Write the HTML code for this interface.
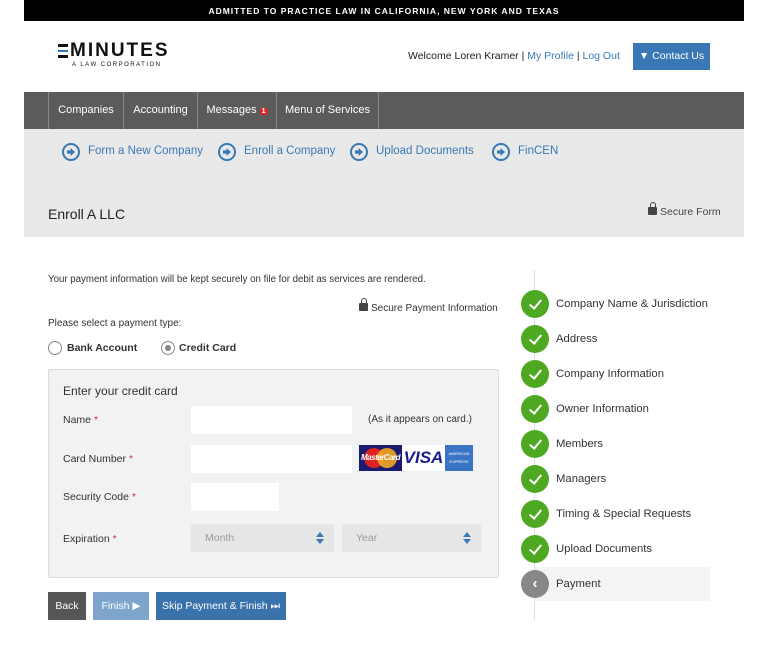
<!DOCTYPE html>
<html><head><style>
*{margin:0;padding:0;box-sizing:border-box}
body{width:768px;height:647px;background:#fff;font-family:"Liberation Sans",sans-serif;color:#333;position:relative;overflow:hidden;font-size:11px}
.a{position:absolute}
.top{left:24px;top:0;width:720px;height:21px;background:#000;color:#fff;font-size:8.5px;font-weight:bold;letter-spacing:1px;text-align:center;line-height:22px}
.nav{left:24px;top:92px;width:720px;height:37px;background:#5b5b5b}
.ni{top:0;height:37px;line-height:37px;color:#fff;font-size:11px;text-align:center;border-left:1px solid #888}
.sub{left:24px;top:129px;width:720px;height:108px;background:#e9e9e9}
.lnk{color:#3a78b5;font-size:11.5px}
.arr{width:18px;height:18px;border:2px solid #3a78b5;border-radius:50%;display:inline-block;position:absolute;}
.arr:after{content:"";position:absolute;left:3px;top:3px;width:8px;height:8px;background:#3a78b5;clip-path:polygon(0 30%,45% 30%,45% 0,100% 50%,45% 100%,45% 70%,0 70%)}
.inp{background:#fff;height:28px}
.sel{background:#e6e6e6;height:28px;color:#999;font-size:10.5px;line-height:28px;padding-left:14px}
.up,.dn{position:absolute;right:10px;width:0;height:0;border-left:4px solid transparent;border-right:4px solid transparent}
.up{top:8px;border-bottom:5px solid #3a78b5}
.dn{top:15px;border-top:5px solid #3a78b5}
.st{left:521px;width:28px;height:28px;border-radius:50%;background:#4ea821}
.st:after{content:"";position:absolute;left:10.5px;top:7px;width:5px;height:10px;border:solid #fff;border-width:0 2.5px 2.5px 0;transform:rotate(40deg)}
.sl{left:556px;font-size:11.3px;color:#333}
.lock{display:inline-block;width:9px;height:8px;background:#444;border-radius:1px;position:relative;margin-right:3px}
.lock:before{content:"";position:absolute;left:1.5px;top:-5px;width:6px;height:6px;border:1.5px solid #444;border-bottom:none;border-radius:3px 3px 0 0;box-sizing:border-box}
</style></head><body>
<div class="a top">ADMITTED TO PRACTICE LAW IN CALIFORNIA, NEW YORK AND TEXAS</div>
<div class="a" style="left:58px;top:44px;width:10px;height:14px;">
<div class="a" style="left:0;top:0;width:10px;height:2.5px;background:#111"></div>
<div class="a" style="left:0;top:5.5px;width:10px;height:2.5px;background:#3a78b5"></div>
<div class="a" style="left:0;top:11px;width:10px;height:2.5px;background:#111"></div></div>
<div class="a" style="left:70px;top:40px;font-size:19px;letter-spacing:2px;color:#111;font-weight:bold">MINUTES</div>
<div class="a" style="left:72px;top:62px;font-size:6px;letter-spacing:1.5px;color:#111">A LAW CORPORATION</div>
<div class="a" style="left:408px;top:50px;font-size:10.5px;color:#222">Welcome Loren Kramer | <span style="color:#3a78b5">My Profile</span> | <span style="color:#3a78b5">Log Out</span></div>
<div class="a" style="left:633px;top:43px;width:77px;height:27px;background:#3a78b5;color:#fff;font-size:10.5px;line-height:27px;text-align:center">▼ Contact Us</div>
<div class="a nav">
<div class="a ni" style="left:24px;width:75px">Companies</div>
<div class="a ni" style="left:99px;width:74px">Accounting</div>
<div class="a ni" style="left:173px;width:79px">Messages <span style="background:#d42a2a;border-radius:2px;font-size:7px;padding:0 2px;font-weight:bold">1</span></div>
<div class="a ni" style="left:252px;width:103px;border-right:1px solid #888">Menu of Services</div>
</div>
<div class="a sub"></div>
<span class="arr" style="left:62px;top:143px"></span><div class="a lnk" style="left:88px;top:145px">Form a New Company</div>
<span class="arr" style="left:218px;top:143px"></span><div class="a lnk" style="left:244px;top:145px">Enroll a Company</div>
<span class="arr" style="left:350px;top:143px"></span><div class="a lnk" style="left:376px;top:145px">Upload Documents</div>
<span class="arr" style="left:492px;top:143px"></span><div class="a lnk" style="left:518px;top:145px">FinCEN</div>
<div class="a" style="left:48px;top:206px;font-size:14px;color:#222">Enroll A LLC</div>
<div class="a" style="left:648px;top:206px;font-size:10.5px;color:#444"><span class="lock"></span>Secure Form</div>

<div class="a" style="left:48px;top:274px;font-size:9.7px">Your payment information will be kept securely on file for debit as services are rendered.</div>
<div class="a" style="left:359px;top:303px;font-size:10px"><span class="lock"></span>Secure Payment Information</div>
<div class="a" style="left:48px;top:318px;font-size:10px">Please select a payment type:</div>
<div class="a" style="left:48px;top:341px;width:14px;height:14px;border:1px solid #888;border-radius:50%"></div>
<div class="a" style="left:67px;top:342px;font-size:10.5px;font-weight:bold">Bank Account</div>
<div class="a" style="left:161px;top:341px;width:14px;height:14px;border:1px solid #888;border-radius:50%"><div class="a" style="left:3px;top:3px;width:6px;height:6px;border-radius:50%;background:#888"></div></div>
<div class="a" style="left:179px;top:342px;font-size:10.5px;font-weight:bold">Credit Card</div>

<div class="a" style="left:48px;top:369px;width:451px;height:209px;background:#f2f2f2;border:1px solid #ddd;border-radius:2px"></div>
<div class="a" style="left:63px;top:384px;font-size:12px">Enter your credit card</div>
<div class="a" style="left:63px;top:414px;font-size:10.5px">Name <span style="color:#c33">*</span></div>
<div class="a inp" style="left:191px;top:406px;width:161px"></div>
<div class="a" style="left:368px;top:414px;font-size:10px">(As it appears on card.)</div>
<div class="a" style="left:63px;top:453px;font-size:10.5px">Card Number <span style="color:#c33">*</span></div>
<div class="a inp" style="left:191px;top:445px;width:161px"></div>
<div class="a" style="left:359px;top:445px;width:43px;height:26px;background:#1a1a6e"><div class="a" style="left:5px;top:3px;width:20px;height:20px;border-radius:50%;background:#d22"></div><div class="a" style="left:18px;top:3px;width:20px;height:20px;border-radius:50%;background:#f5a623;opacity:.9"></div><div class="a" style="left:2px;top:8px;font-size:8px;color:#fff;font-weight:bold;font-style:italic;letter-spacing:-.5px">MasterCard</div></div>
<div class="a" style="left:402px;top:445px;width:43px;height:26px;background:#fff;color:#1a1f8e;font-weight:bold;font-style:italic;font-size:17px;line-height:26px;text-align:center">VISA</div>
<div class="a" style="left:445px;top:445px;width:28px;height:26px;background:#3a74c4;color:#fff;font-size:4px;line-height:8px;text-align:center;padding-top:5px">AMERICAN<br>EXPRESS</div>
<div class="a" style="left:63px;top:491px;font-size:10.5px">Security Code <span style="color:#c33">*</span></div>
<div class="a inp" style="left:191px;top:483px;width:88px"></div>
<div class="a" style="left:63px;top:533px;font-size:10.5px">Expiration <span style="color:#c33">*</span></div>
<div class="a sel" style="left:191px;top:524px;width:143px">Month<i class="up"></i><i class="dn"></i></div>
<div class="a sel" style="left:342px;top:524px;width:139px">Year<i class="up"></i><i class="dn"></i></div>

<div class="a" style="left:48px;top:592px;width:38px;height:28px;background:#555;color:#fff;font-size:10.5px;line-height:28px;text-align:center">Back</div>
<div class="a" style="left:93px;top:592px;width:56px;height:28px;background:#7ea6cc;color:#fff;font-size:10.5px;line-height:28px;text-align:center">Finish ▶</div>
<div class="a" style="left:156px;top:592px;width:130px;height:28px;background:#3a72ac;color:#fff;font-size:10.5px;line-height:28px;text-align:center">Skip Payment &amp; Finish ⏭</div>

<div class="a" style="left:534px;top:270px;width:1px;height:350px;background:#ddd"></div>
<div class="a" style="left:535px;top:567px;width:175px;height:34px;background:#f4f4f4"></div>
<div class="a st" style="top:290px"></div><div class="a sl" style="top:298px">Company Name &amp; Jurisdiction</div>
<div class="a st" style="top:325px"></div><div class="a sl" style="top:333px">Address</div>
<div class="a st" style="top:360px"></div><div class="a sl" style="top:368px">Company Information</div>
<div class="a st" style="top:395px"></div><div class="a sl" style="top:403px">Owner Information</div>
<div class="a st" style="top:430px"></div><div class="a sl" style="top:438px">Members</div>
<div class="a st" style="top:465px"></div><div class="a sl" style="top:473px">Managers</div>
<div class="a st" style="top:500px"></div><div class="a sl" style="top:508px">Timing &amp; Special Requests</div>
<div class="a st" style="top:535px"></div><div class="a sl" style="top:543px">Upload Documents</div>
<div class="a" style="left:521px;top:570px;width:28px;height:28px;border-radius:50%;background:#888;color:#fff;font-weight:bold;font-size:15px;line-height:27px;text-align:center">‹</div><div class="a sl" style="top:578px">Payment</div>
</body></html>
